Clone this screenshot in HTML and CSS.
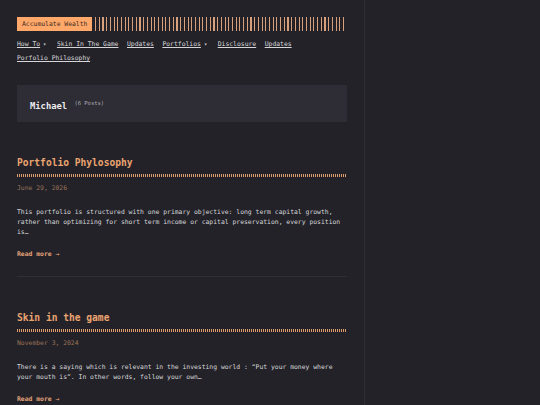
FILE: index.html
```
<!DOCTYPE html>
<html lang="en">
<head>
  <meta charset="UTF-8" />
  <meta name="viewport" content="width=device-width, initial-scale=1.0"/>
  <title>Michael - Accumulate Wealth</title>
  <link rel="stylesheet" href="styles.css">
</head>
<body>
  <div class="layout">
    <div class="main">
      <header class="header">
        <div class="logo-row">
          <a class="logo" href="#">Accumulate Wealth</a>
          <span class="logo-stripes"></span>
        </div>
        <nav class="menu">
          <a href="#" class="has-sub">How To</a>
          <a href="#">Skin In The Game</a>
          <a href="#">Updates</a>
          <a href="#" class="has-sub">Portfolios</a>
          <a href="#">Disclosure</a>
          <a href="#">Updates</a>
          <a href="#">Porfolio Philosophy</a>
        </nav>
      </header>

      <div class="author-box">
        <h1>Michael <sup>(6 Posts)</sup></h1>
      </div>

      <article class="post">
        <h2 class="post-title"><a href="#">Portfolio Phylosophy</a></h2>
        <div class="post-date">June 29, 2026</div>
        <p class="post-text">
          This portfolio is structured with one primary objective: long term capital growth,
          rather than optimizing for short term income or capital preservation, every position
          is…
        </p>
        <a class="read-more" href="#">Read more →</a>
      </article>

      <article class="post">
        <h2 class="post-title"><a href="#">Skin in the game</a></h2>
        <div class="post-date">November 3, 2024</div>
        <p class="post-text">
          There is a saying which is relevant in the investing world : “Put your money where
          your mouth is”. In other words, follow your own…
        </p>
        <a class="read-more" href="#">Read more →</a>
      </article>
    </div>
    <aside class="side"></aside>
  </div>
</body>
</html>
```

FILE: styles.css
```
body {
  background: #232229;
  font-family: 'DejaVu Sans Mono', monospace;
  font-size: 6.4px;
  color: #d6d6d8;
  margin: 0;
  padding: 0;
}

a {
  color: inherit;
}

.layout {
  display: flex;
  min-height: 405px;
}

.main {
  width: 330px;
  padding: 17px 17px 0 17px;
  border-right: 1px solid #2f2e36;
}

.side {
  flex: 1;
}

/* logo with striped tail */
.logo-row {
  display: flex;
  align-items: stretch;
  height: 14px;
}

.logo {
  background: #ffa86a;
  color: #3a2a20;
  text-decoration: none;
  padding: 0 5px;
  display: flex;
  align-items: center;
}

.logo-stripes {
  flex: 1;
  margin-left: 3px;
  background: repeating-linear-gradient(90deg, #d9a07c 0 1.1px, transparent 1.1px 3.7px);
}

.menu {
  display: flex;
  flex-wrap: wrap;
  gap: 6px 8.5px;
  margin-top: 9px;
  line-height: 8px;
}

.menu a {
  text-decoration: underline;
  text-underline-offset: 1px;
}

.menu .has-sub::after {
  content: "▾";
  display: inline-block;
  margin: 0 2px 0 3px;
  text-decoration: none;
  font-size: 5.5px;
}

.author-box {
  background: #2e2d35;
  margin-top: 23px;
  padding: 13px;
  height: 11px;
}

.author-box h1 {
  margin: 0;
  font-size: 8.8px;
  line-height: 11px;
  color: #ececee;
}

.author-box sup {
  font-size: 5.5px;
  font-weight: normal;
  color: #a9a9ad;
  margin-left: 2px;
}

.post {
  padding-top: 34px;
  padding-bottom: 18px;
  border-bottom: 1px solid #2f2e36;
}

.post + .post {
  padding-top: 34px;
  border-bottom: none;
}

.post-title {
  margin: 0;
  font-size: 9.6px;
  line-height: 13px;
  color: #eba470;
}

.post-title a {
  text-decoration: none;
}

.post-title::after {
  content: "";
  display: block;
  height: 3px;
  margin-top: 5px;
  background: repeating-linear-gradient(90deg, #d99a6c 0 1px, transparent 1px 2px);
}

.post-date {
  color: #9a7256;
  margin-top: 7px;
  line-height: 9px;
}

.post-text {
  margin: 14px 0 0;
  line-height: 10px;
}

.read-more {
  display: inline-block;
  margin-top: 13px;
  color: #e3a27a;
  font-weight: bold;
  text-decoration: none;
}
```
